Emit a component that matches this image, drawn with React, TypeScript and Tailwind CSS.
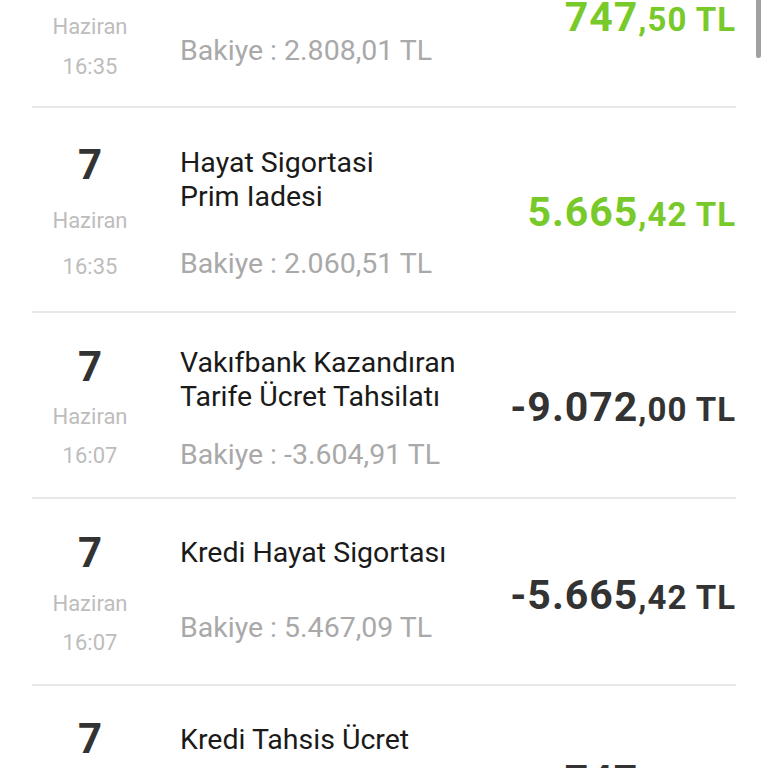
import React from 'react';

type Tx = {
  day: string;
  month: string;
  time: string;
  title: string[];
  balance: string;
  whole: string;
  cents: string;
  positive: boolean;
  row: string;
  gapMonth: string;
  gapTime: string;
  titleTop: string;
  gapBalance: string;
};

// liste biraz aşağı kaydırılmış halde, ilk satırın üstü ekran dışında
const txs: Tx[] = [
  {
    day: '7', month: 'Haziran', time: '16:35', title: ['Kredi Tahsis Ücret İadesi'],
    balance: 'Bakiye : 2.808,01 TL', whole: '747', cents: ',50 TL', positive: true,
    row: 'h-[186px] pt-[33px] pb-[24px]', gapMonth: 'mt-[16px]', gapTime: 'mt-[12px]', titleTop: 'mt-[4px]', gapBalance: 'mt-[41px]',
  },
  {
    day: '7', month: 'Haziran', time: '16:35', title: ['Hayat Sigortasi', 'Prim Iadesi'],
    balance: 'Bakiye : 2.060,51 TL', whole: '5.665', cents: ',42 TL', positive: true,
    row: 'h-[205px] pt-[36px] pb-[29px]', gapMonth: 'mt-[21px]', gapTime: 'mt-[18px]', titleTop: 'mt-[2px]', gapBalance: 'mt-[33px]',
  },
  {
    day: '7', month: 'Haziran', time: '16:07', title: ['Vakıfbank Kazandıran', 'Tarife Ücret Tahsilatı'],
    balance: 'Bakiye : -3.604,91 TL', whole: '-9.072', cents: ',00 TL', positive: false,
    row: 'h-[186px] pt-[33px] pb-[27px]', gapMonth: 'mt-[15px]', gapTime: 'mt-[11px]', titleTop: 'mt-0', gapBalance: 'mt-[24px]',
  },
  {
    day: '7', month: 'Haziran', time: '16:07', title: ['Kredi Hayat Sigortası'],
    balance: 'Bakiye : 5.467,09 TL', whole: '-5.665', cents: ',42 TL', positive: false,
    row: 'h-[187px] pt-[33px] pb-[24px]', gapMonth: 'mt-[16px]', gapTime: 'mt-[11px]', titleTop: 'mt-[4px]', gapBalance: 'mt-[41px]',
  },
  {
    day: '7', month: 'Haziran', time: '16:07', title: ['Kredi Tahsis Ücret'],
    balance: 'Bakiye : 5.467,09 TL', whole: '747', cents: ',50 TL', positive: false,
    row: 'h-[187px] pt-[32px] pb-[27px]', gapMonth: 'mt-[16px]', gapTime: 'mt-[11px]', titleTop: 'mt-[5px]', gapBalance: 'mt-[41px]',
  },
];

const TxRow = ({ tx }: { tx: Tx }) => (
  <div className={`flex border-b-2 border-[#e8e8e8] ${tx.row}`}>
    {/* tarih */}
    <div className="flex w-[116px] shrink-0 flex-col items-center">
      <div className="text-[42px] font-bold leading-[42px] text-[#333333]">{tx.day}</div>
      <div className={`text-[22px] leading-[28px] text-[#bdbdbd] ${tx.gapMonth}`}>{tx.month}</div>
      <div className={`text-[22px] leading-[28px] text-[#bdbdbd] ${tx.gapTime}`}>{tx.time}</div>
    </div>

    {/* açıklama + bakiye */}
    <div className="flex min-w-0 flex-1 flex-col pl-8">
      <div className={`text-[28.5px] leading-[34px] text-[#1a1a1a] ${tx.titleTop}`}>
        {tx.title.map((t) => (
          <div key={t} className="whitespace-nowrap">{t}</div>
        ))}
      </div>
      <div className={`whitespace-nowrap text-[28.5px] leading-[34px] text-[#a9a9a9] ${tx.gapBalance}`}>{tx.balance}</div>
    </div>

    {/* tutar */}
    <div className={`self-center whitespace-nowrap font-bold ${tx.positive ? 'text-[#78c92a]' : 'text-[#333333]'}`}>
      <span className="text-[41px] leading-[44px] tracking-[1px]">{tx.whole}</span>
      <span className="text-[33px] leading-[44px] tracking-[1px]">{tx.cents}</span>
    </div>
  </div>
);

export default function App() {
  return (
    <div className="relative h-[768px] w-[768px] overflow-hidden bg-white font-['Roboto',sans-serif]">
      <div className="mx-8 -mt-[78px]">
        {txs.map((tx, i) => (
          <TxRow key={i} tx={tx} />
        ))}
      </div>
      {/* scrollbar */}
      <div className="absolute right-[7px] top-0 h-[58px] w-[5px] rounded-b-full bg-[#a0a0a0]" />
    </div>
  );
}
